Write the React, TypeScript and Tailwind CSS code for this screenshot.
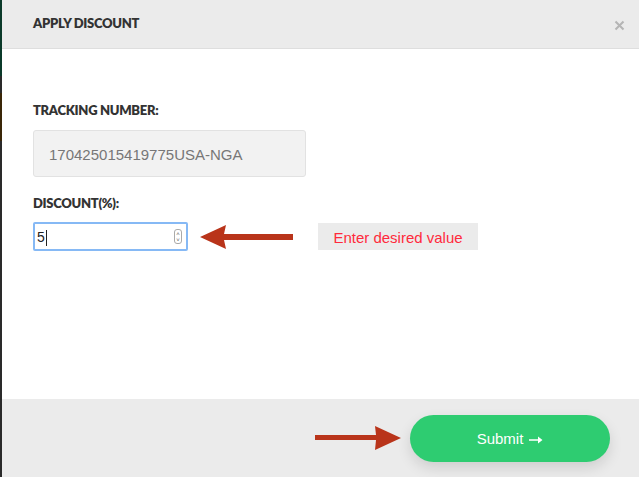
const labelFont = { fontFamily: 'Lato, "Open Sans", sans-serif' };
const bodyFont = { fontFamily: '"Liberation Sans", Arial, sans-serif' };

function LeftArrow() {
  return (
    <svg width="94" height="26" viewBox="0 0 94 26" className="shrink-0">
      <path d="M0 13 L26 1 L24 10 L93 10 L93 16 L24 16 L26 25 Z" fill="#b9341a" />
    </svg>
  );
}

function RightArrow() {
  return (
    <svg width="86" height="26" viewBox="0 0 86 26" className="shrink-0">
      <path d="M86 13 L60 1 L61 10 L0 10 L0 15 L61 15 L60 25 Z" fill="#b9341a" />
    </svg>
  );
}

export default function App() {
  return (
    <div className="flex h-[477px] w-[639px] overflow-hidden bg-[#2a2a2a]">
      <div className="flex w-[2px] shrink-0 flex-col">
        <div className="h-[76px] bg-[#0b3a2a]" />
        <div className="h-[17px] bg-[#2a2a2a]" />
        <div className="h-[48px] bg-[#3a2608]" />
        <div className="flex-1 bg-[#2a2a2a]" />
      </div>

      <div className="flex flex-1 flex-col bg-white">
        <header className="flex h-[49px] shrink-0 items-center justify-between border-b border-[#dedede] bg-[#ebebeb] pl-[31px] pr-[14px]">
          <h2
            className="text-[13px] font-extrabold tracking-[-0.3px] text-[#333]"
            style={labelFont}
          >
            APPLY DISCOUNT
          </h2>
          <svg width="11" height="11" viewBox="0 0 11 11" className="mt-[2px]">
            <path d="M1.5 1.5 L9.5 9.5 M9.5 1.5 L1.5 9.5" stroke="#b5b5b5" strokeWidth="2" />
          </svg>
        </header>

        <main className="flex-1 px-[31px] pt-[53px]">
          <label
            className="block text-[13px] font-extrabold leading-4 tracking-[-0.3px] text-[#333]"
            style={labelFont}
          >
            TRACKING NUMBER:
          </label>
          <div
            className="mt-[12px] flex h-[47px] w-[273px] items-center rounded-[3px] border border-[#e2e2e2] bg-[#f2f2f2] pl-[15px] pt-[3px] text-[15px] text-[#777]"
            style={bodyFont}
          >
            170425015419775USA-NGA
          </div>

          <label
            className="mt-[18px] block text-[13px] font-extrabold leading-4 tracking-[-0.3px] text-[#333]"
            style={labelFont}
          >
            DISCOUNT(%):
          </label>
          <div className="mt-[11px] flex items-center">
            <div
              className="flex h-[29px] w-[155px] items-center justify-between rounded-[2px] border-2 border-[#86b9f5] bg-white pl-[2px] pr-[4px] text-[14px] text-[#222]"
              style={bodyFont}
            >
              <span className="flex items-center pt-[2px]">
                5<span className="ml-px inline-block h-[16px] w-px bg-[#222]" />
              </span>
              <span className="flex h-[15px] w-[8px] flex-col items-center justify-center rounded-[3px] border border-[#aaa] text-[6px] leading-[6px] text-[#555]">
                <span>˄</span>
                <span>˅</span>
              </span>
            </div>
            <div className="ml-[12px]">
              <LeftArrow />
            </div>
            <div
              className="ml-[24px] flex h-[27px] w-[160px] items-center justify-center bg-[#ebebeb] pt-[3px] text-[15px] text-[#ff2a3c]"
              style={bodyFont}
            >
              Enter desired value
            </div>
          </div>
        </main>

        <footer className="flex h-[78px] shrink-0 items-center justify-end bg-[#ebebeb] pr-[29px]">
          <RightArrow />
          <button
            className="ml-[9px] flex h-[47px] w-[200px] items-center justify-center gap-[6px] rounded-full bg-[#2ecc71] pt-[3px] text-[15px] text-white shadow-[0_6px_14px_rgba(0,0,0,0.12)]"
            style={bodyFont}
          >
            Submit
            <svg width="14" height="8" viewBox="0 0 14 8">
              <path d="M0 3.2 H9 V0.5 L13.5 4 L9 7.5 V4.8 H0 Z" fill="white" />
            </svg>
          </button>
        </footer>
      </div>
    </div>
  );
}
